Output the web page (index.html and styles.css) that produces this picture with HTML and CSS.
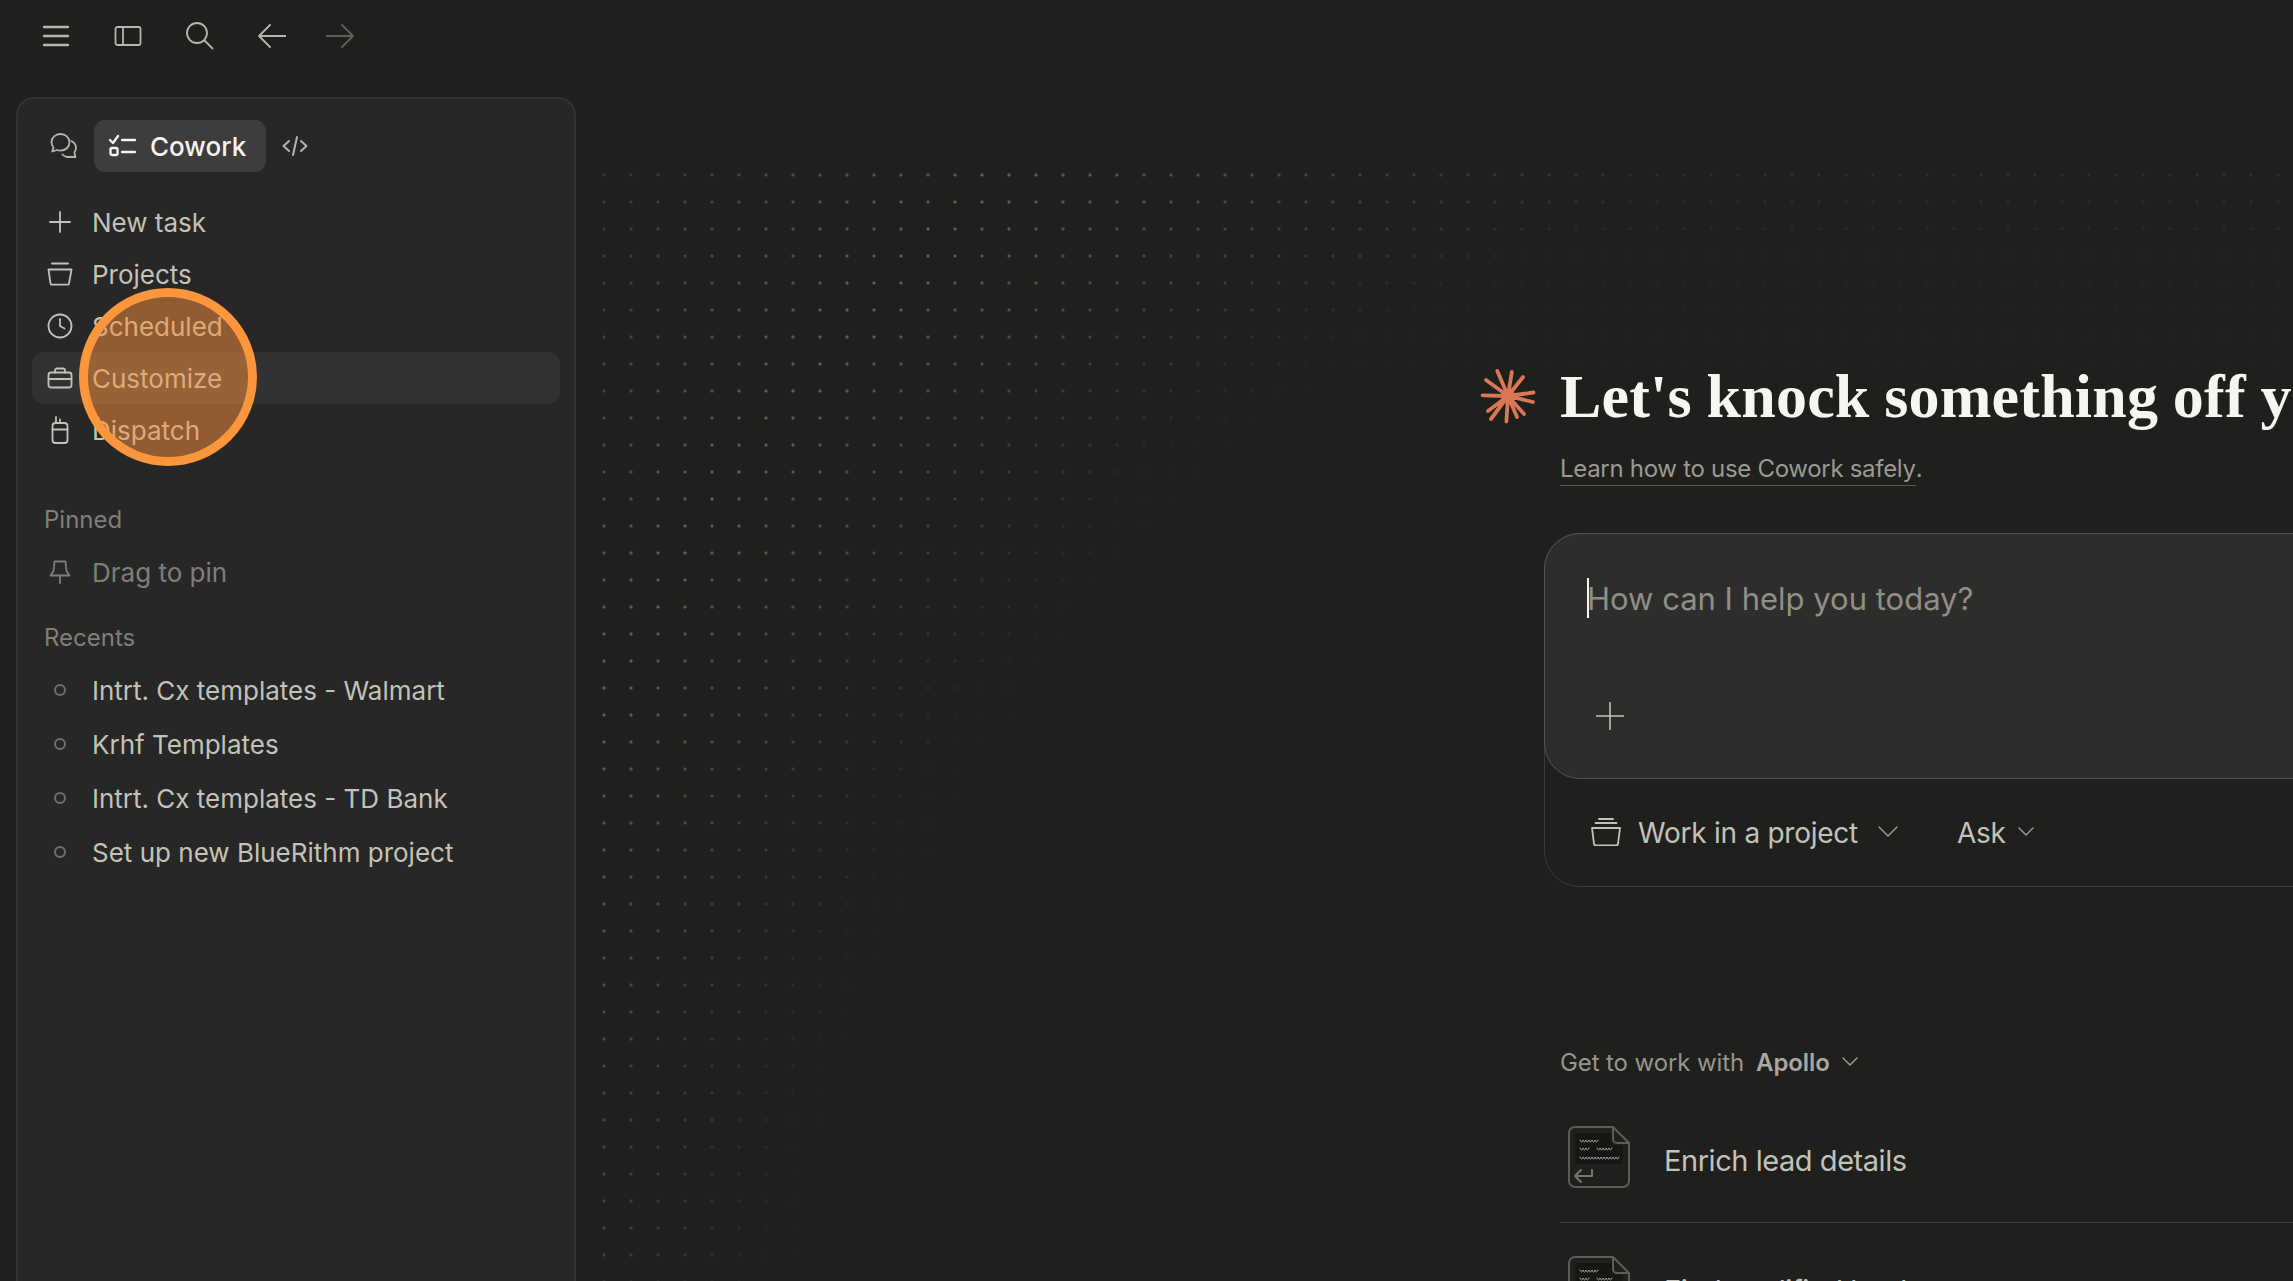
FILE: index.html
```html
<!DOCTYPE html>
<html lang="en">
<head>
    <meta charset="UTF-8">
    <title>Cowork</title>
    <link rel="stylesheet" href="styles.css">
</head>
<body>
    <div class="dots"></div>

    <div class="app">
        <!-- Left column -->
        <div class="side">
            <div class="topbar">
                <svg class="tb-icon" width="28" height="28" viewBox="0 0 28 28"><path d="M2 5h24M2 14h24M2 23h24" stroke-width="2.4"/></svg>
                <svg class="tb-icon" width="28" height="28" viewBox="0 0 28 28"><rect x="1.5" y="5" width="25" height="18" rx="2"/><path d="M9 5v18"/></svg>
                <svg class="tb-icon" width="28" height="28" viewBox="0 0 28 28"><circle cx="11" cy="11" r="10"/><path d="M18.5 18.5l8 8"/></svg>
                <svg class="tb-icon" width="28" height="28" viewBox="0 0 28 28"><path d="M28 14H1M12 3L1 14l11 11"/></svg>
                <svg class="tb-icon tb-off" width="28" height="28" viewBox="0 0 28 28"><path d="M0 14h27M16 3l11 11-11 11"/></svg>
            </div>

            <div class="panel">
                <div class="tabs">
                    <svg class="tab-icon" width="28" height="28" viewBox="0 0 28 28"><path d="M10.500 2c5 0 9 3.600 9 8.300 0 4.700-4 8.300-9 8.300-1.300 0-2.500-.2-3.600-.6L2.300 19.500l1.200-4C2.200 14 1.500 12.200 1.500 10.300 1.500 5.600 5.500 2 10.500 2z"/><path d="M21.500 9c2.600 1.500 4.500 3.900 4.500 6.800 0 1.800-.6 3.300-1.600 4.600l1 4.600H17c-1.900-.3-3.400-1.200-4.500-2.500"/></svg>
                    <div class="tab-on">
                        <svg width="28" height="28" viewBox="0 0 28 28"><path d="M2 8l3 3 5-7M14 8h13M14 20h13" stroke-width="2.300"/><rect x="2.500" y="16" width="7" height="7" rx="1.500" stroke-width="2.300"/></svg>
                        <span>Cowork</span>
                    </div>
                    <svg class="tab-icon" width="28" height="28" viewBox="0 0 28 28"><path d="M8 9l-5.500 5L8 19M20 9l5.500 5-5.500 5M16 5l-4 18" stroke-width="2"/></svg>
                </div>

                <div class="nav">
                    <div class="row">
                        <svg width="28" height="28" viewBox="0 0 28 28"><path d="M14 4v20M4 14h20"/></svg>
                        <span>New task</span>
                    </div>
                    <div class="row">
                        <svg width="28" height="28" viewBox="0 0 28 28"><path d="M6 3.500h16M2.500 9.500h23l-2.500 14a1.500 1.500 0 0 1-1.500 1.200h-15.500a1.500 1.500 0 0 1-1.500-1.200z"/></svg>
                        <span>Projects</span>
                    </div>
                    <div class="row">
                        <svg width="28" height="28" viewBox="0 0 28 28"><circle cx="14" cy="14" r="11.500"/><path d="M14 7v7l4.500 2.500"/></svg>
                        <span>Scheduled</span>
                    </div>
                    <div class="row row-on">
                        <svg width="28" height="28" viewBox="0 0 28 28"><rect x="2.500" y="8.500" width="23" height="15" rx="2.500"/><path d="M9 8.500V6.500a2 2 0 0 1 2-2h6a2 2 0 0 1 2 2v2M2.500 15h23"/></svg>
                        <span>Customize</span>
                    </div>
                    <div class="row">
                        <svg width="28" height="28" viewBox="0 0 28 28"><rect x="6.500" y="7" width="15" height="20" rx="3"/><path d="M10 7V1M14 7V3.500M6.500 13.500h15"/></svg>
                        <span>Dispatch</span>
                    </div>
                </div>

                <div class="label label-pinned">Pinned</div>
                <div class="row row-dim">
                    <svg width="28" height="28" viewBox="0 0 28 28"><path d="M8.500 3.500h11l1 9.500 3 4.500H4.500l3-4.500zM14 17.500V25"/></svg>
                    <span>Drag to pin</span>
                </div>

                <div class="label label-recents">Recents</div>
                <div class="recents">
                    <div class="row row-recent"><i class="ring"></i><span>Intrt. Cx templates - Walmart</span></div>
                    <div class="row row-recent"><i class="ring"></i><span>Krhf Templates</span></div>
                    <div class="row row-recent"><i class="ring"></i><span>Intrt. Cx templates - TD Bank</span></div>
                    <div class="row row-recent"><i class="ring"></i><span>Set up new BlueRithm project</span></div>
                </div>
            </div>
        </div>

        <!-- Main area -->
        <div class="main">
            <div class="hero">
                <svg class="spark" width="56" height="56" viewBox="0 0 56 56">
                    <circle cx="28" cy="28" r="7"/>
                    <path d="M28 28L17.300 3M28 28L31.800 4M28 28L43 9M28 28L53.500 24.500M28 28L53 34M28 28L44 46M28 28L37 49M28 28L26.400 53.500M28 28L11 51M28 28L8 43M28 28L2.500 27.300M28 28L6 12"/>
                </svg>
                <h1>Let's knock something off your list</h1>
            </div>
            <div class="learn"><a>Learn how to use Cowork safely</a>.</div>

            <div class="composer">
                <div class="composer-box">
                    <div class="prompt"><i class="caret"></i><span>How can I help you today?</span></div>
                    <svg class="add" width="28" height="28" viewBox="0 0 28 28"><path d="M14 0v28M0 14h28"/></svg>
                </div>
                <div class="composer-foot">
                    <svg class="stack" width="30" height="28" viewBox="0 0 30 28"><path d="M8 1h14M4.500 5h21M1 10h28l-2 16a2 2 0 0 1-2 1.500H5a2 2 0 0 1-2-1.500z"/></svg>
                    <span class="foot-text">Work in a project</span>
                    <svg class="chev" width="20" height="12" viewBox="0 0 20 12"><path d="M1 1l9 9 9-9"/></svg>
                    <span class="foot-text foot-ask">Ask</span>
                    <svg class="chev chev-small" width="16" height="10" viewBox="0 0 16 10"><path d="M1 1l7 7 7-7"/></svg>
                </div>
            </div>

            <div class="work-head">
                <span>Get to work with</span>
                <b>Apollo</b>
                <svg class="chev chev-small" width="16" height="10" viewBox="0 0 16 10"><path d="M1 1l7 7 7-7"/></svg>
            </div>

            <div class="work-row">
                <svg class="doc" width="62" height="62" viewBox="0 0 62 62">
                    <path class="doc-edge" d="M7 1h38l16 16v38a6 6 0 0 1-6 6H7a6 6 0 0 1-6-6V7a6 6 0 0 1 6-6zM45 1v12a4 4 0 0 0 4 4h12"/>
                    <path class="doc-screen" d="M9 7h35v12h11v17a2 2 0 0 1-2 2H9a2 2 0 0 1-2-2V9a2 2 0 0 1 2-2z"/>
                    <path class="doc-wave" d="M12 14q1.500 4 3 0q1.500 4 3 0q1.500 4 3 0q1.500 4 3 0q1.500 4 3 0q1.500 4 3 0M12 22q1.500 4 3 0q1.500 4 3 0q1.500 4 3 0M29 22q1.500 4 3 0q1.500 4 3 0q1.500 4 3 0q1.500 4 3 0q1.500 4 3 0M12 31q1.500 4 3 0q1.500 4 3 0q1.500 4 3 0q1.500 4 3 0q1.500 4 3 0q1.500 4 3 0q1.500 4 3 0q1.500 4 3 0q1.500 4 3 0q1.500 4 3 0q1.500 4 3 0q1.500 4 3 0q1.500 4 3 0"/>
                    <path class="doc-arrow" d="M24 44v6H8M13 44l-6 6 6 6"/>
                </svg>
                <span>Enrich lead details</span>
            </div>
            <div class="work-row">
                <svg class="doc" width="62" height="62" viewBox="0 0 62 62">
                    <path class="doc-edge" d="M7 1h38l16 16v38a6 6 0 0 1-6 6H7a6 6 0 0 1-6-6V7a6 6 0 0 1 6-6zM45 1v12a4 4 0 0 0 4 4h12"/>
                    <path class="doc-screen" d="M9 7h35v12h11v17a2 2 0 0 1-2 2H9a2 2 0 0 1-2-2V9a2 2 0 0 1 2-2z"/>
                    <path class="doc-wave" d="M12 14q1.500 4 3 0q1.500 4 3 0q1.500 4 3 0q1.500 4 3 0q1.500 4 3 0q1.500 4 3 0M12 22q1.500 4 3 0q1.500 4 3 0q1.500 4 3 0M29 22q1.500 4 3 0q1.500 4 3 0q1.500 4 3 0q1.500 4 3 0q1.500 4 3 0"/>
                </svg>
                <span>Find qualified leads</span>
            </div>
        </div>
    </div>

    <!-- Cursor highlight from the screen recorder -->
    <div class="cursor-ring"></div>
</body>
</html>
```

FILE: styles.css
```css
html, body {
    margin: 0;
    height: 100%;
    overflow: hidden;
}

body {
    background-color: #1f1f1e;
    color: #c2c2b8;
    font-family: Inter, "Liberation Sans", sans-serif;
    font-size: 26px;
}

svg {
    display: block;
    flex: none;
    fill: none;
    stroke: currentColor;
    stroke-width: 1.8;
    stroke-linecap: round;
    stroke-linejoin: round;
}

/* dotted backdrop, fades out around the hero */
.dots {
    position: absolute;
    left: 590px;
    top: 160px;
    right: 0;
    bottom: 0;
    background-image: radial-gradient(circle at 14px 15px, #686864 0, #5c5c58 1px, transparent 2.2px);
    background-size: 27px 27px;
    -webkit-mask-image: radial-gradient(circle at 1610px 1340px, transparent 1420px, #000 1790px, rgba(0, 0, 0, 0.12) 2100px), linear-gradient(180deg, rgba(0, 0, 0, 0.22) 10px, transparent 240px);
    mask-image: radial-gradient(circle at 1610px 1340px, transparent 1420px, #000 1790px, rgba(0, 0, 0, 0.12) 2100px), linear-gradient(180deg, rgba(0, 0, 0, 0.22) 10px, transparent 240px);
}

.app {
    position: relative;
    display: flex;
    height: 100%;
}

.side {
    width: 560px;
    margin-left: 16px;
    flex: none;
    display: flex;
    flex-direction: column;
}

.topbar {
    height: 97px;
    flex: none;
    display: flex;
    align-items: center;
    gap: 44px;
    padding: 0 0 25px 26px;
    box-sizing: border-box;
    color: #b5b5ab;
}

.tb-off {
    margin-left: -4px;
    color: #5f5f5a;
}

/* sidebar panel */
.panel {
    flex: 1;
    background-color: #272727;
    border: 2px solid #323231;
    border-bottom: none;
    border-radius: 18px 18px 0 0;
    padding: 21px 14px 0;
}

.tabs {
    display: flex;
    align-items: center;
    height: 52px;
    padding-left: 18px;
    color: #b5b5ab;
}

.tab-on {
    display: flex;
    align-items: center;
    gap: 14px;
    height: 52px;
    width: 172px;
    margin-left: 16px;
    margin-right: 15px;
    padding-left: 14px;
    box-sizing: border-box;
    border-radius: 11px;
    background-color: #3d3d3d;
    color: #f4f4f0;
    font-weight: 500;
}

.nav {
    margin-top: 24px;
}

.row {
    display: flex;
    align-items: center;
    gap: 18px;
    height: 52px;
    padding-left: 14px;
    border-radius: 12px;
}

.row span {
    padding-top: 1px;
}

.row-on {
    background-color: #323232;
}

.row-dim {
    margin-top: 11px;
    color: #7f7f78;
}

.row-recent {
    height: 54px;
}

.label {
    height: 30px;
    line-height: 30px;
    padding-left: 12px;
    font-size: 24px;
    color: #7f7f78;
}

.label-pinned {
    margin-top: 49px;
}

.label-recents {
    margin-top: 25px;
}

.recents {
    margin-top: 10px;
}

.ring {
    width: 12px;
    height: 12px;
    margin: 0 8px;
    box-sizing: border-box;
    border: 2px solid #707069;
    border-radius: 50%;
    flex: none;
}

/* main column */
.main {
    flex: 1;
    min-width: 0;
    overflow: hidden;
    padding: 360px 0 0 904px;
}

.hero {
    display: flex;
    align-items: center;
    gap: 24px;
    white-space: nowrap;
}

.spark {
    color: #d97757;
    stroke-width: 3.8;
}

.spark circle {
    fill: currentColor;
    stroke: none;
}

h1 {
    margin: 0;
    font-family: "Liberation Serif", serif;
    font-size: 62px;
    line-height: 72px;
    font-weight: bold;
    letter-spacing: 0.2px;
    word-spacing: -1px;
    color: #f5f5f1;
}

.learn {
    margin: 21px 0 0 80px;
    height: 32px;
    line-height: 32px;
    font-size: 24px;
    letter-spacing: -0.3px;
    color: #9a9a92;
    white-space: nowrap;
}

.learn a {
    display: inline-block;
    height: 32px;
    border-bottom: 1px solid #5a5a56;
}

.composer {
    width: 1000px;
    height: 354px;
    margin: 48px 0 0 64px;
    box-sizing: border-box;
    border: 1px solid #3a3a38;
    border-radius: 36px;
    background-color: #1f1f1e;
}

.composer-box {
    height: 246px;
    margin: -1px;
    box-sizing: border-box;
    padding: 44px 0 0 42px;
    border: 1px solid #545452;
    border-radius: 36px;
    background-color: #2d2d2c;
}

.prompt {
    display: flex;
    align-items: center;
    height: 40px;
    font-size: 31px;
    color: #8f8f88;
}

.prompt span {
    padding-top: 1px;
}

.caret {
    width: 2px;
    height: 40px;
    margin-right: -2px;
    background-color: #f4f4f0;
    flex: none;
}

.add {
    margin: 84px 0 0 9px;
    stroke-width: 1.6;
}

.composer-foot {
    display: flex;
    align-items: center;
    height: 107px;
    padding-left: 46px;
    font-size: 28px;
    letter-spacing: -0.25px;
}

.foot-text {
    padding-top: 3px;
}

.stack {
    margin-right: 17px;
}

.chev {
    margin-left: 20px;
    color: #a0a098;
    stroke-width: 1.4;
}

.chev-small {
    margin-left: 12px;
}

.foot-ask {
    margin-left: 59px;
}

.work-head {
    display: flex;
    align-items: center;
    height: 32px;
    margin: 159px 0 15px 80px;
    font-size: 24px;
    letter-spacing: -0.1px;
    color: #96968e;
}

.work-head b {
    margin-left: 12px;
    font-weight: 600;
    color: #a8a8a0;
}

.work-row {
    display: flex;
    align-items: center;
    gap: 34px;
    width: 1000px;
    margin-left: 80px;
    padding: 33px 0 34px 8px;
    border-bottom: 1px solid #3a3a38;
    font-size: 29px;
    letter-spacing: -0.45px;
}

.work-row span {
    padding-top: 6px;
}

.doc-edge {
    stroke: #5c5c59;
    stroke-width: 2;
}

.doc-screen {
    fill: #161615;
    stroke: none;
}

.doc-wave {
    stroke: #a8a8a0;
    stroke-width: 1;
}

.doc-arrow {
    stroke: #777772;
    stroke-width: 2;
}

/* overlay, sits on top of the sidebar */
.cursor-ring {
    position: absolute;
    left: 79px;
    top: 288px;
    width: 178px;
    height: 178px;
    box-sizing: border-box;
    border: 9px solid #fb963c;
    border-radius: 50%;
    background-color: rgba(251, 146, 60, 0.5);
}
```
